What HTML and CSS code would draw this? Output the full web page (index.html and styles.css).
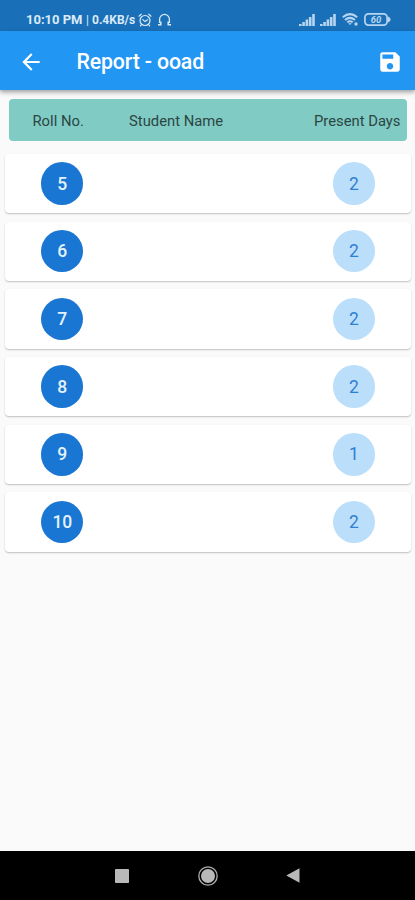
FILE: index.html
```html
<!DOCTYPE html>
<html lang="en">
<head>
<meta charset="utf-8">
<title>Report - ooad</title>
<link rel="stylesheet" href="styles.css">
</head>
<body>
<div class="status-bar">
  <span class="clock">10:10 PM</span><span class="divider">|</span><span class="speed">0.4KB/s</span>
  <svg class="alarm" width="14" height="14" viewBox="0 0 14 14" fill="none" stroke="currentColor" stroke-width="1.2" stroke-linecap="round"><circle cx="7" cy="7.5" r="5"/><path d="M1 3.2 3.2 1.2M13 3.2 10.8 1.2M4.8 6.6 7 8.6 9.6 6.8M3.4 11.6l-1 1.2M10.6 11.6l1 1.2"/></svg>
  <svg class="headset" width="15" height="14" viewBox="0 0 15 14" fill="none" stroke="currentColor" stroke-width="1.3"><path d="M2.600 10V6.300a4.900 4.900 0 0 1 9.800 0V10"/><path d="M1 11.800h2.800V8.500M14 11.800h-2.800V8.500" stroke-width="1.500"/></svg>
  <div class="signals">
    <svg width="16" height="12" viewBox="0 0 16 12" fill="currentColor"><path d="M0 10h2.600v2H0zM3.300 8h2.600v4H3.300zM6.600 5.500h2.600V12H6.600zM9.900 3h2.600v9H9.900zM13.200 0h2.600v12h-2.600z"/></svg>
    <svg width="16" height="12" viewBox="0 0 16 12" fill="currentColor"><path d="M0 10h2.600v2H0zM3.300 8h2.600v4H3.300zM6.600 5.500h2.600V12H6.600zM9.900 3h2.600v9H9.900zM13.200 0h2.600v12h-2.600z"/></svg>
    <svg class="wifi" width="17" height="13" viewBox="0 0 17 13" fill="none" stroke="currentColor" stroke-width="2"><path d="M.8 4.200Q8 -2 15.200 4.200M3 6.900Q8 2.800 13 6.900M5.300 9.300Q8 7.200 10.700 9.300"/><path d="M8 12 6.200 10.200h3.600z" fill="currentColor" stroke="none"/><circle cx="14" cy="11" r="1.700" fill="currentColor" stroke="none"/></svg>
    <svg class="battery" width="27" height="13" viewBox="0 0 27 13"><rect x=".9" y=".9" width="22.200" height="11.200" rx="3.500" fill="none" stroke="currentColor" stroke-width="1.700"/><path d="M24 3.500q2.600 1 2.600 3t-2.600 3z" fill="currentColor"/><text x="12" y="9.900" text-anchor="middle">60</text></svg>
  </div>
</div>
<header class="app-bar">
  <svg class="back" width="26" height="26" viewBox="0 0 24 24" fill="currentColor"><path d="M20 11H7.830l5.590-5.590L12 4l-8 8 8 8 1.410-1.410L7.830 13H20v-2z"/></svg>
  <h1>Report - ooad</h1>
  <svg class="save" width="26" height="26" viewBox="0 0 24 24" fill="currentColor"><path d="M17 3H5c-1.110 0-2 .9-2 2v14c0 1.100.890 2 2 2h14c1.100 0 2-.900 2-2V7l-4-4zm-5 16c-1.660 0-3-1.340-3-3s1.340-3 3-3 3 1.340 3 3-1.340 3-3 3zm3-10H5V5h10v4z"/></svg>
</header>
<main>
  <div class="columns"><span class="roll">Roll No.</span><span class="name">Student Name</span><span class="days">Present Days</span></div>
  <div class="list">
    <div class="card"><span class="badge number">5</span><span class="badge count">2</span></div>
    <div class="card"><span class="badge number">6</span><span class="badge count">2</span></div>
    <div class="card"><span class="badge number">7</span><span class="badge count">2</span></div>
    <div class="card"><span class="badge number">8</span><span class="badge count">2</span></div>
    <div class="card"><span class="badge number">9</span><span class="badge count">1</span></div>
    <div class="card"><span class="badge number">10</span><span class="badge count">2</span></div>
  </div>
</main>
<nav class="nav-bar">
  <svg width="14" height="14" viewBox="0 0 14 14"><rect width="14" height="14" rx=".8" fill="#b9b9b9"/></svg>
  <svg width="20" height="20" viewBox="0 0 20 20"><circle cx="10" cy="10" r="9.200" fill="none" stroke="#adadad" stroke-width="1.300"/><circle cx="10" cy="10" r="7" fill="#b9b9b9"/></svg>
  <svg width="14" height="15" viewBox="0 0 14 15"><path d="M13.500.3v14.400L.3 7.500z" fill="#b9b9b9"/></svg>
</nav>
</body>
</html>
```
FILE: styles.css
```css
* { box-sizing: border-box; }
body {
  margin: 0;
  height: 900px;
  display: flex;
  flex-direction: column;
  background: #fafafa;
  font-family: Roboto, "Liberation Sans", sans-serif;
  overflow: hidden;
}
svg { display: block; flex: none; }
.status-bar {
  height: 31px;
  flex: none;
  display: flex;
  align-items: center;
  padding: 8px 24px 0 26px;
  background: #1a70b8;
  color: #dbeaf8;
  font-size: 12px;
  font-weight: 700;
  line-height: 14px;
  white-space: nowrap;
}
.clock { width: 60px; font-size: 13px; letter-spacing: 0; }
.divider { width: 6px; font-weight: 400; }
.speed { width: 45px; font-size: 12px; letter-spacing: 0; }
.alarm { margin-left: 1px; }
.headset { margin-left: 5px; }
.signals { display: flex; align-items: center; margin-left: auto; color: #b7d5f0; }
.signals svg + svg { margin-left: 5px; }
.signals .wifi { margin-left: 6px; }
.signals .battery { margin-left: 5px; }
.battery text { font: italic 700 9.5px Roboto, sans-serif; fill: currentColor; }
.app-bar {
  position: relative;
  height: 59px;
  flex: none;
  display: flex;
  align-items: center;
  padding: 2px 12px 0 17.500px;
  background: #2196f3;
  color: #fff;
  box-shadow: 0 2px 4px rgba(0, 0, 0, .28), 0 3px 6px rgba(0, 0, 0, .1);
}
.app-bar h1 { margin: 0 0 0 33px; font-size: 21.300px; font-weight: 500; line-height: 28px; letter-spacing: -.15px; }
.save { margin-left: auto; }
main { flex: 1; padding: 9px 4.5px 0; }
.columns {
  height: 42px;
  margin: 0 3.5px 0 4.500px;
  padding: 1px 6.500px 0 23.500px;
  display: flex;
  align-items: center;
  background: #80cbc4;
  border-radius: 4px;
  color: #2c4643;
  font-size: 14.8px;
  white-space: nowrap;
}
.roll { width: 96.500px; }
.days { margin-left: auto; }
.list { display: flex; flex-direction: column; gap: 8.500px; margin-top: 13px; }
.card {
  height: 59.200px;
  display: flex;
  align-items: center;
  justify-content: space-between;
  padding: 0 35.500px 0 36.500px;
  background: #fff;
  border-radius: 4px;
  box-shadow: 0 1px 1.500px rgba(0, 0, 0, .2), 0 1px 3px rgba(0, 0, 0, .04);
}
.badge {
  width: 42.400px;
  height: 42.400px;
  border-radius: 50%;
  display: flex;
  align-items: center;
  justify-content: center;
  font-size: 17.500px;
}
.number { background: #1976d2; color: #e3f2fd; font-weight: 500; letter-spacing: -.2px; }
.count { background: #bbdefb; color: #2f7fd3; }
.nav-bar {
  height: 49px;
  flex: none;
  display: flex;
  align-items: center;
  padding: 0 0 0 115px;
  background: #000;
}
.nav-bar svg + svg { margin-left: 69px; }
.nav-bar svg:last-child { margin-left: 68px; }
```
